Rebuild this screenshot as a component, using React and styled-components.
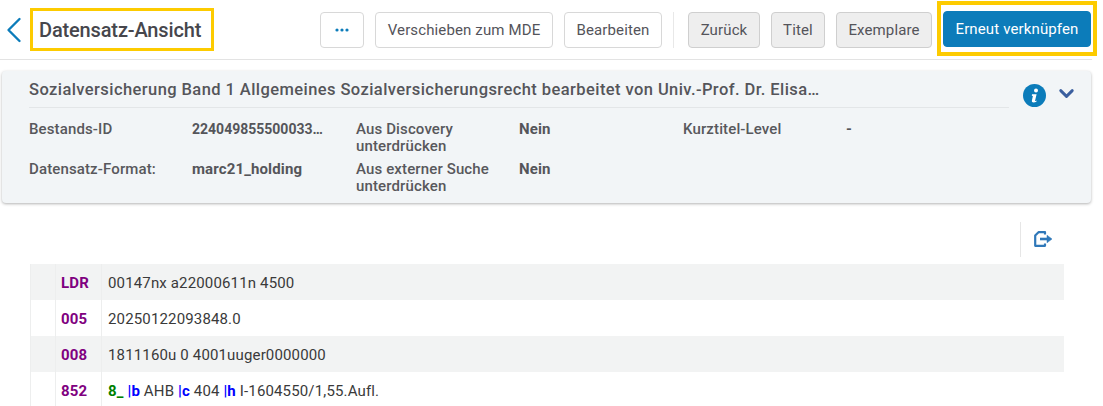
import { ChevronLeft, ChevronDown } from "lucide-react";
import styled, { createGlobalStyle } from "styled-components";

const GlobalStyle = createGlobalStyle`
  html, body {
    margin: 0;
    padding: 0;
    background: #fff;
    font-family: Roboto, "Liberation Sans", sans-serif;
    color: #3a3a3a;
  }
`;

const Page = styled.div`
  width: 1103px;
  height: 406px;
  overflow: hidden;
  background: #fff;
`;

const Header = styled.header`
  display: flex;
  align-items: flex-start;
  height: 59px;
  margin-right: 11px;
  border-bottom: 1px solid #e3e3e3;
  box-sizing: content-box;
`;

const BackButton = styled.button`
  display: flex;
  flex-shrink: 0;
  align-items: center;
  justify-content: center;
  width: 30px;
  height: 59px;
  padding: 0 2px 0 0;
  border: 0;
  background: none;
  color: #0c7cba;
  svg {
    flex-shrink: 0;
  }
`;

const TitleBox = styled.div`
  display: flex;
  flex-shrink: 0;
  align-items: center;
  box-sizing: border-box;
  width: 184px;
  height: 43px;
  margin-top: 8px;
  padding-left: 6px;
  border: 3.5px solid #fdcb00;
  font-size: 20px;
  font-weight: 500;
  letter-spacing: -0.15px;
  color: #46464c;
`;

const Actions = styled.div`
  display: flex;
  flex-shrink: 0;
  align-items: center;
  gap: 11px;
  margin-left: 106px;
  margin-top: 12px;
`;

const Button = styled.button`
  box-sizing: border-box;
  height: 36px;
  width: ${(p) => p.$w}px;
  padding: 0;
  border-radius: 4px;
  border: 1px solid ${(p) => (p.$tone === "grey" ? "#cfcfcf" : p.$tone === "primary" ? "#0c7cba" : "#d8d8d8")};
  background: ${(p) => (p.$tone === "grey" ? "#eeeeee" : p.$tone === "primary" ? "#0c7cba" : "#fff")};
  color: ${(p) => (p.$tone === "primary" ? "#fff" : "#54545a")};
  font-family: inherit;
  font-size: 15px;
  letter-spacing: 0.13px;
  display: flex;
  align-items: center;
  justify-content: center;
`;

const Separator = styled.span`
  width: 1px;
  height: 36px;
  margin-right: 3px;
  background: #e8e8e8;
`;

const Highlight = styled.div`
  box-sizing: border-box;
  display: flex;
  align-items: center;
  justify-content: center;
  width: 160px;
  height: 55px;
  margin: -11px 0 -8px -6px;
  border: 4px solid #fdcb00;
`;

const Card = styled.section`
  display: flex;
  box-sizing: border-box;
  width: 1089px;
  height: 132px;
  margin: 11px 0 0 2px;
  padding: 8px 0 0 27px;
  background: #f2f5f7;
  border-radius: 4px;
  box-shadow: 0 1px 3px rgba(0, 0, 0, 0.3);
`;

const CardMain = styled.div`
  width: 980px;
`;

const CardTitle = styled.h2`
  margin: 0;
  height: 28px;
  line-height: 21px;
  font-size: 16.5px;
  font-weight: 500;
  color: #55555a;
  letter-spacing: 0.42px;
  border-bottom: 1px solid #e3e6e8;
  white-space: nowrap;
  overflow: hidden;
`;

const FieldGrid = styled.dl`
  display: grid;
  grid-template-columns: 163px 164px 163px 164px 163px 100px;
  grid-auto-rows: 40px;
  margin: 13px 0 0;
  font-size: 15px;
  letter-spacing: 0.13px;
  line-height: 17px;
`;

const Label = styled.dt`
  width: 145px;
  color: #58585c;
  font-weight: 500;
`;

const Value = styled.dd`
  margin: 0;
  font-weight: 700;
  font-size: ${(p) => (p.$compact ? "14px" : "15px")};
  letter-spacing: ${(p) => (p.$compact ? "0" : "0.13px")};
  color: #55555a;
  white-space: nowrap;
`;

const CardTools = styled.div`
  display: flex;
  align-items: flex-start;
  gap: 9px;
  margin-left: 14px;
  padding-top: 5px;
  svg:last-child {
    margin-top: -2px;
  }
`;

const ToolRow = styled.div`
  display: flex;
  justify-content: flex-end;
  align-items: center;
  height: 35px;
  margin: 19px 50px 7px 0;
`;

const ExportButton = styled.div`
  display: flex;
  align-items: center;
  height: 35px;
  padding: 0 0 2px 13px;
  box-sizing: border-box;
  border-left: 1px solid #e6e6e6;
  color: #2f78b9;
`;

const Table = styled.div`
  width: 1034px;
  margin-left: 30px;
  font-size: 15px;
  letter-spacing: 0.15px;
`;

const Row = styled.div`
  display: grid;
  grid-template-columns: 25px 46px 1fr;
  height: 36px;
  background: ${(p) => (p.$shaded ? "#f2f3f3" : "#fff")};
`;

const Cell = styled.div`
  display: flex;
  align-items: center;
  padding: 1px 0 0 6px;
  border-left: 1px solid #edeeee;
`;

const Tag = styled(Cell)`
  padding-left: 5px;
  font-weight: 700;
  color: #800080;
`;

const Ind = styled.b`
  color: #008000;
  font-weight: 700;
`;

const Sub = styled.b`
  color: #0000ff;
  font-weight: 700;
`;

function DotsIcon() {
  return (
    <svg width="14" height="4" viewBox="0 0 14 4" fill="#0c7cba">
      <circle cx="2" cy="2" r="1.6" />
      <circle cx="7" cy="2" r="1.6" />
      <circle cx="12" cy="2" r="1.6" />
    </svg>
  );
}

function InfoIcon() {
  return (
    <svg width="23" height="23" viewBox="0 0 23 23">
      <circle cx="11.5" cy="11.5" r="11.5" fill="#0c7cba" />
      <circle cx="13" cy="6.4" r="2" fill="#fff" />
      <path
        d="M9 10.2h4.6l-1.5 6.2c-.1.4.1.6.6.5l.9-.3-.2 1.2c-1 .4-1.9.6-2.8.6-1.3 0-2-.7-1.7-2l1-4.4-1.1-.3z"
        fill="#fff"
      />
    </svg>
  );
}

function ExportIcon() {
  return (
    <svg width="19" height="16" viewBox="0 0 19 16" fill="none" stroke="currentColor" strokeWidth="2.2">
      <path d="M11 3.5V1.2H4.5L1.2 4.5v10.3H11v-2.3" strokeLinejoin="round" />
      <path d="M6 8h8.5" strokeWidth="2.6" />
      <path d="M13 4.2 18 8l-5 3.8z" fill="currentColor" strokeWidth="0.5" />
    </svg>
  );
}

export default function App() {
  return (
    <Page>
      <GlobalStyle />
      <Header>
        <BackButton>
          <ChevronLeft size={44} strokeWidth={1.3} />
        </BackButton>
        <TitleBox>Datensatz-Ansicht</TitleBox>
        <Actions>
          <Button $w={44}>
            <DotsIcon />
          </Button>
          <Button $w={178}>Verschieben zum MDE</Button>
          <Button $w={98}>Bearbeiten</Button>
          <Separator />
          <Button $w={72} $tone="grey">Zurück</Button>
          <Button $w={54} $tone="grey">Titel</Button>
          <Button $w={96} $tone="grey">Exemplare</Button>
          <Highlight>
            <Button $w={148} $tone="primary">Erneut verknüpfen</Button>
          </Highlight>
        </Actions>
      </Header>
      <Card>
        <CardMain>
          <CardTitle>
            Sozialversicherung Band 1 Allgemeines Sozialversicherungsrecht bearbeitet von Univ.-Prof. Dr. Elisa…
          </CardTitle>
          <FieldGrid>
            <Label>Bestands-ID</Label>
            <Value $compact>224049855500033…</Value>
            <Label>Aus Discovery unterdrücken</Label>
            <Value>Nein</Value>
            <Label>Kurztitel-Level</Label>
            <Value>-</Value>
            <Label>Datensatz-Format:</Label>
            <Value>marc21_holding</Value>
            <Label>Aus externer Suche unterdrücken</Label>
            <Value>Nein</Value>
          </FieldGrid>
        </CardMain>
        <CardTools>
          <InfoIcon />
          <ChevronDown size={23} strokeWidth={3} color="#3b5f9f" />
        </CardTools>
      </Card>
      <ToolRow>
        <ExportButton>
          <ExportIcon />
        </ExportButton>
      </ToolRow>
      <Table>
        <Row $shaded>
          <Cell />
          <Tag>LDR</Tag>
          <Cell>00147nx a22000611n 4500</Cell>
        </Row>
        <Row>
          <Cell />
          <Tag>005</Tag>
          <Cell>20250122093848.0</Cell>
        </Row>
        <Row $shaded>
          <Cell />
          <Tag>008</Tag>
          <Cell>1811160u 0 4001uuger0000000</Cell>
        </Row>
        <Row>
          <Cell />
          <Tag>852</Tag>
          <Cell>
            <span>
              <Ind>8_</Ind> <Sub>|b</Sub> AHB <Sub>|c</Sub> 404 <Sub>|h</Sub> I-1604550/1,55.Aufl.
            </span>
          </Cell>
        </Row>
      </Table>
    </Page>
  );
}
